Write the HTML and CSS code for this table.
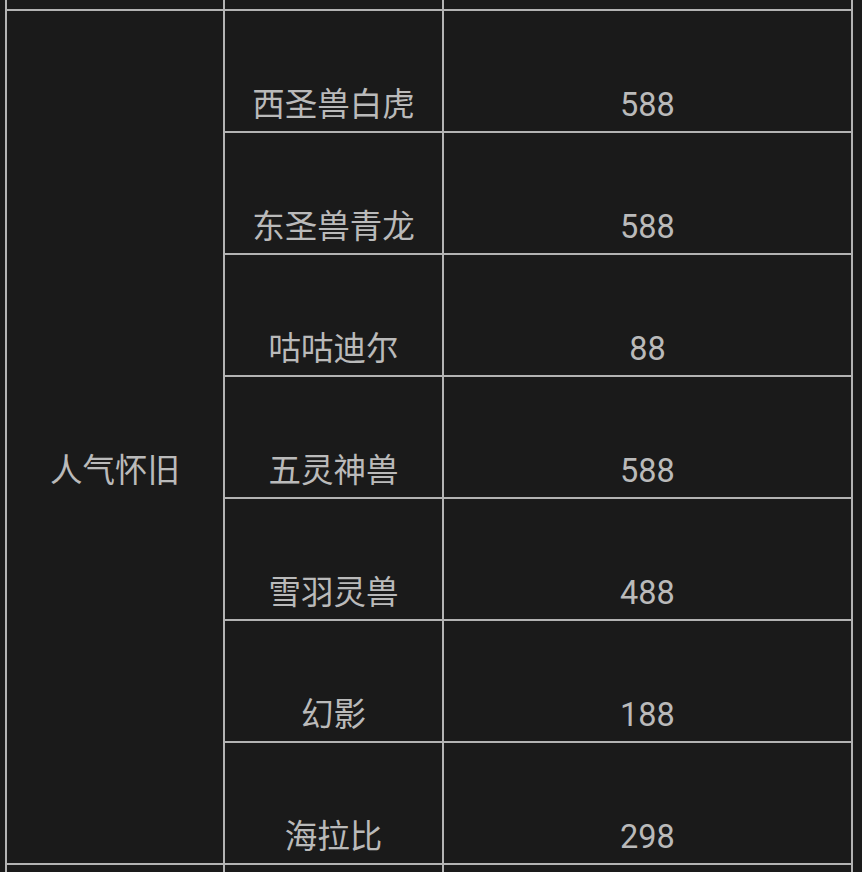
FILE: index.html
```html
<!DOCTYPE html>
<html lang="zh-CN">
<head>
<meta charset="utf-8">
<title>人气怀旧</title>
<link rel="stylesheet" href="styles.css">
</head>
<body>
<div class="table">
  <div class="cell stub"></div>
  <div class="cell stub"></div>
  <div class="cell stub"></div>

  <div class="cell group">人气怀旧</div>
  <div class="cell">西圣兽白虎</div><div class="cell">588</div>
  <div class="cell">东圣兽青龙</div><div class="cell">588</div>
  <div class="cell">咕咕迪尔</div><div class="cell">88</div>
  <div class="cell">五灵神兽</div><div class="cell">588</div>
  <div class="cell">雪羽灵兽</div><div class="cell">488</div>
  <div class="cell">幻影</div><div class="cell">188</div>
  <div class="cell">海拉比</div><div class="cell">298</div>

  <div class="cell tail"></div>
  <div class="cell tail"></div>
  <div class="cell tail"></div>
</div>
</body>
</html>
```
FILE: styles.css
```css
html, body {
  margin: 0;
  padding: 0;
  background: #1a1a1a;
}
body {
  font-family: Roboto, "Noto Sans CJK SC", sans-serif;
  color: #bababa;
  overflow: hidden;
}
.table {
  margin-left: 5px;
  width: 848px;
  box-sizing: border-box;
  padding: 0 2px;
  background: #b3b3b3;
  display: grid;
  grid-template-columns: 216px 217px 407px;
  grid-template-rows: 9px repeat(7, 120px) 100px;
  column-gap: 2px;
  row-gap: 2px;
}
.cell {
  background: #1a1a1a;
  box-sizing: border-box;
  padding-top: 68px;
  display: flex;
  align-items: center;
  justify-content: center;
  font-size: 32.5px;
  line-height: 1;
  white-space: nowrap;
}
.stub, .tail {
  padding-top: 0;
}
.group {
  grid-row: span 7;
}
```
